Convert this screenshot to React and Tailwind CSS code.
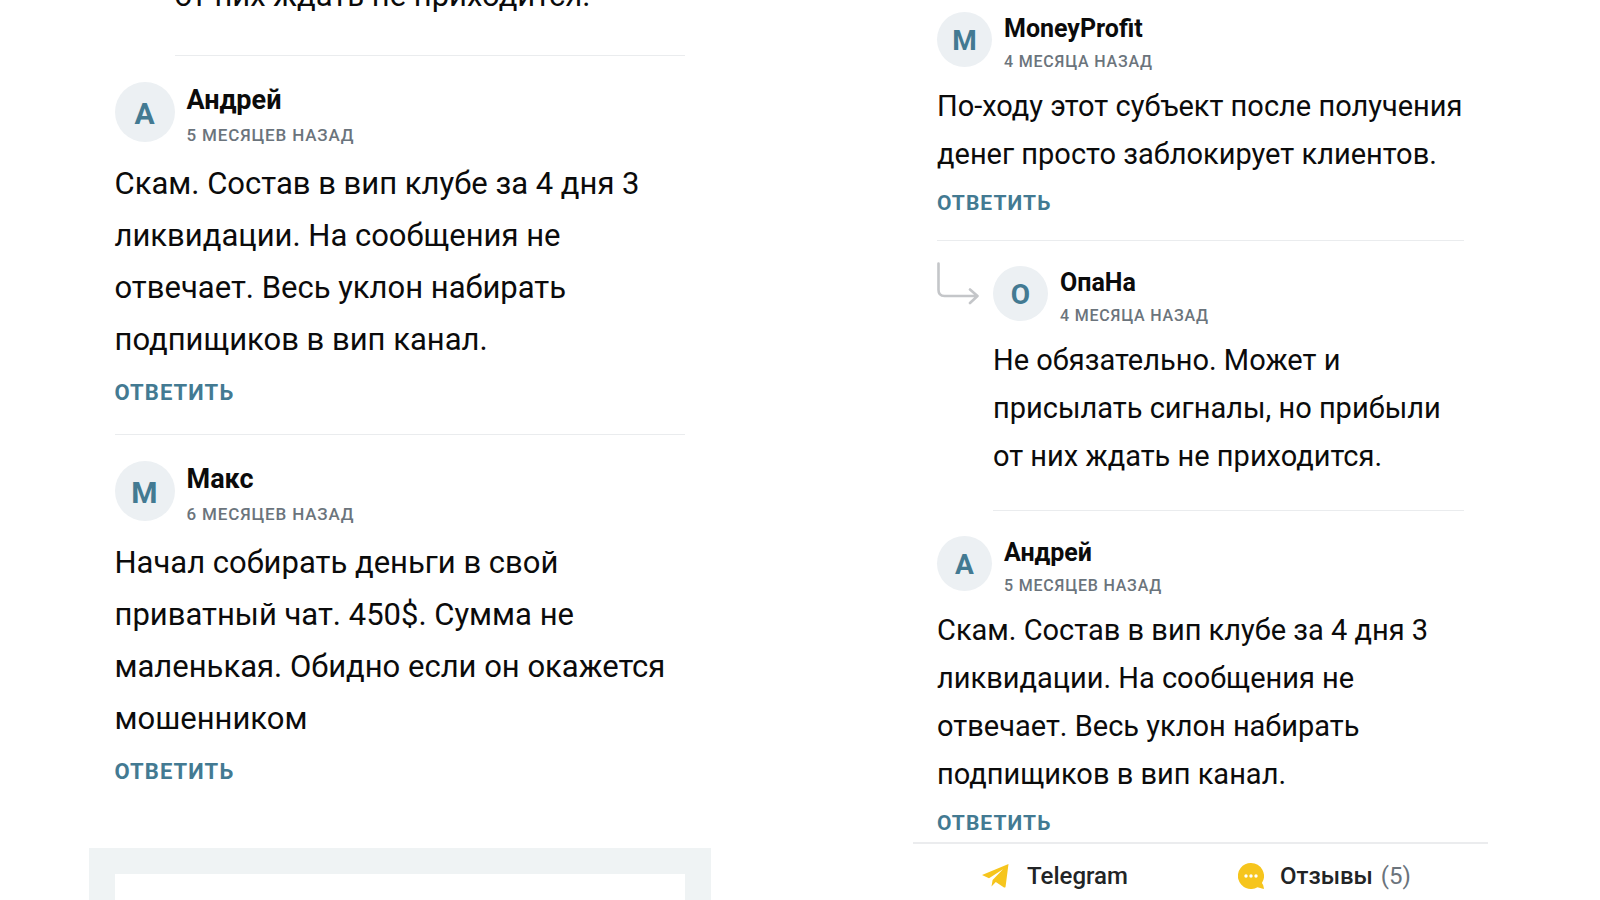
import React from 'react';
import clsx from 'clsx';

const firstThread = [
  {
    id: 1,
    name: 'Андрей',
    date: '5 месяцев назад',
    text: 'Скам. Состав в вип клубе за 4 дня 3 ликвидации. На сообщения не отвечает. Весь уклон набирать подпищиков в вип канал.',
  },
  {
    id: 2,
    name: 'Макс',
    date: '6 месяцев назад',
    text: 'Начал собирать деньги в свой приватный чат. 450$. Сумма не маленькая. Обидно если он окажется мошенником',
  },
];

const secondThread = [
  {
    id: 3,
    name: 'MoneyProfit',
    date: '4 месяца назад',
    text: 'По-ходу этот субъект после получения денег просто заблокирует клиентов.',
  },
  {
    id: 4,
    name: 'ОпаНа',
    date: '4 месяца назад',
    text: 'Не обязательно. Может и присылать сигналы, но прибыли от них ждать не приходится.',
    nested: true,
  },
  {
    id: 5,
    name: 'Андрей',
    date: '5 месяцев назад',
    text: 'Скам. Состав в вип клубе за 4 дня 3 ликвидации. На сообщения не отвечает. Весь уклон набирать подпищиков в вип канал.',
  },
];

const ReplyArrow = () => (
  <svg className="absolute left-0 -top-1 w-[42px] h-[44px]" viewBox="0 0 42 44" fill="none" stroke="#c4c6c9" strokeWidth="2.6" strokeLinecap="round" strokeLinejoin="round" aria-hidden="true">
    <path d="M1.5 1.5V28q0 6 6 6H40M33 27.5L40.5 34L33 41" />
  </svg>
);

const PlaneIcon = () => (
  <svg className="w-[27px] h-[24px]" viewBox="0 0 27 24" fill="#f6c51d" aria-hidden="true">
    <path d="M26.5 0L0 11L7 14.3L21 5.2L10.6 16L9.5 22.5L13.8 18L22 23.5Q23.3 24 23.6 22.4Z" />
  </svg>
);

const ChatIcon = () => (
  <svg className="w-[26px] h-[26px]" viewBox="0 0 26 26" aria-hidden="true">
    <path fill="#f6c51d" d="M13 0a13 13 0 1 0 6.5 24.2L25.8 26Q26.2 22.6 23.9 20A13 13 0 0 0 13 0Z" />
    <circle cx="8" cy="13" r="1.7" fill="#fff" />
    <circle cx="13" cy="13" r="1.7" fill="#fff" />
    <circle cx="18" cy="13" r="1.7" fill="#fff" />
  </svg>
);

// size "lg" is the wide thread, "md" the one with the bottom bar
const Comment = ({ comment, size }) => {
  const lg = size === 'lg';
  return (
    <article className={clsx(comment.nested && 'relative pl-[56px]')}>
      {comment.nested && <ReplyArrow />}
      <header className="flex gap-3">
        <div
          className={clsx(
            'shrink-0 rounded-full bg-[#ecf0f3] text-[#437a92] font-bold flex items-center justify-center pt-0.5',
            lg ? 'size-[60px] text-[30px]' : 'size-[55px] text-[28px]'
          )}
        >
          {comment.name[0]}
        </div>
        <div>
          <h3 className={clsx('font-bold', lg ? 'text-[27px] leading-[36px]' : 'text-[25px] leading-[34px]')}>
            {comment.name}
          </h3>
          <p
            className={clsx(
              'uppercase tracking-wider font-medium text-[#6b747c]',
              lg ? 'text-[17px] leading-[34px]' : 'text-[16px] leading-[31px]'
            )}
          >
            {comment.date}
          </p>
        </div>
      </header>
      <p className={clsx(lg ? 'mt-1.5 text-[31px] leading-[52px]' : 'mt-[5px] text-[29px] leading-[48px]')}>
        {comment.text}
      </p>
      {!comment.nested && (
        <button
          type="button"
          className={clsx(
            'block mt-px uppercase tracking-wider font-bold text-[#437a92]',
            lg ? 'text-[22px] leading-[52px]' : 'text-[21px] leading-[48px]'
          )}
        >
          Ответить
        </button>
      )}
    </article>
  );
};

const App = () => {
  return (
    <div className="grid grid-cols-2 gap-0.5 h-screen overflow-hidden bg-white text-[#0b0b0b] font-['Roboto','Liberation_Sans',sans-serif]">
      {/* Left thread with the comment form below */}
      <main className="w-full max-w-[622px] mx-auto overflow-hidden">
        <div className="px-[26px]">
          <p className="-mt-[30px] ml-[60px] pb-[33px] border-b border-[#eaecee] text-[31px] leading-[52px]">
            от них ждать не приходится.
          </p>
          {firstThread.map((comment, index) => (
            <div key={comment.id} className={clsx('pt-[26px] pb-[15px]', index > 0 && 'border-t border-[#eaecee]')}>
              <Comment comment={comment} size="lg" />
            </div>
          ))}
        </div>
        <div className="mt-[35px] bg-[#eff3f4] p-[26px]">
          <div className="h-40 bg-white" />
        </div>
      </main>

      {/* Right thread with the bottom bar */}
      <section className="flex flex-col h-screen w-full max-w-[575px] mx-auto">
        <div className="flex-1 min-h-0 overflow-hidden px-6 pt-3">
          <div className="pb-[13px] border-b border-[#eaecee]">
            <Comment comment={secondThread[0]} size="md" />
          </div>
          <div className="pt-[25px]">
            <Comment comment={secondThread[1]} size="md" />
            <div className="ml-[56px] mt-[30px] border-b border-[#eaecee]" />
          </div>
          <div className="pt-[25px]">
            <Comment comment={secondThread[2]} size="md" />
          </div>
        </div>
        <nav className="shrink-0 flex justify-center gap-[110px] pr-2 pt-4 pb-2 border-t-2 border-[#ebecee] text-[24px] leading-[32px] font-medium text-[#222426]">
          <a href="#telegram" className="flex items-center gap-[18px]">
            <PlaneIcon />
            Telegram
          </a>
          <a href="#reviews" className="flex items-center gap-4">
            <ChatIcon />
            <span>
              Отзывы <span className="ml-0.5 font-normal text-[#6b747c]">(5)</span>
            </span>
          </a>
        </nav>
      </section>
    </div>
  );
};

export default App;
